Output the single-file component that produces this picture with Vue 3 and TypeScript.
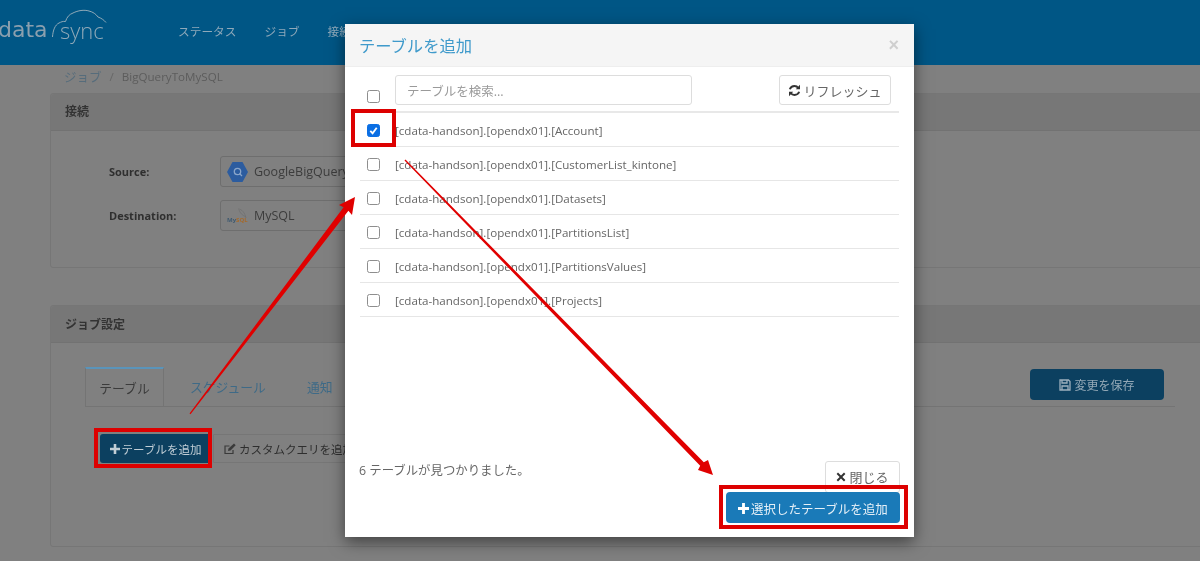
<script setup lang="ts">
const rows = [
  { name: '[cdata-handson].[opendx01].[Account]', checked: true },
  { name: '[cdata-handson].[opendx01].[CustomerList_kintone]', checked: false },
  { name: '[cdata-handson].[opendx01].[Datasets]', checked: false },
  { name: '[cdata-handson].[opendx01].[PartitionsList]', checked: false },
  { name: '[cdata-handson].[opendx01].[PartitionsValues]', checked: false },
  { name: '[cdata-handson].[opendx01].[Projects]', checked: false },
]
const navItems = ['ステータス', 'ジョブ', '接続']
</script>

<template>
  <div class="page">
    <header class="nav">
      <div class="logo">
        <span class="logo-data">data</span>
        <span class="logo-sync">sync</span>
        <svg class="logo-cloud" width="130" height="65" viewBox="0 0 130 65" fill="none" stroke="#8fa9b8" stroke-width="1">
          <path d="M52.500 37C53 30 55 25 59 23C61 22 63 21 65.500 21.500C67 17 69 14.500 73 13C78 10.500 84 9.500 89 11C93 12 96 14 98 17C101 18 104 20 106 22.500" />
        </svg>
      </div>
      <nav class="nav-links">
        <span v-for="item in navItems" :key="item">{{ item }}</span>
      </nav>
    </header>

    <main class="content">
      <div class="crumb"><span class="crumb-link">ジョブ</span><span class="crumb-sep">/</span><span>BigQueryToMySQL</span></div>

      <section class="panel panel-conn">
        <div class="panel-head">接続</div>
        <div class="conn-body">
          <div class="conn-row">
            <label>Source:</label>
            <div class="select">
              <svg width="21" height="20" viewBox="0 0 21 20">
                <path d="M5.500 0H15.500L21 10L15.500 20H5.500L0 10Z" fill="#2c5c9f" />
                <circle cx="10.500" cy="9.500" r="3.200" fill="none" stroke="#8aa5c9" stroke-width="1.300" />
                <path d="M12.500 11.500L15 14" stroke="#8aa5c9" stroke-width="1.300" />
              </svg>
              <span>GoogleBigQuery</span>
            </div>
          </div>
          <div class="conn-row">
            <label>Destination:</label>
            <div class="select">
              <svg width="21" height="20" viewBox="0 0 21 20">
                <path d="M11 3C15 3 18 7 19 12M12 4C13 7 15 9 19 11" fill="none" stroke="#6f6f6f" stroke-width=".7" />
                <text x="0" y="16" font-size="6" font-weight="700" font-family="Open Sans, sans-serif" fill="#3f5a70">My<tspan fill="#a5692a">SQL</tspan></text>
              </svg>
              <span>MySQL</span>
            </div>
          </div>
        </div>
      </section>

      <section class="panel panel-job">
        <div class="panel-head">ジョブ設定</div>
        <div class="job-body">
          <div class="tabs">
            <span class="tab active">テーブル</span>
            <span class="tab">スケジュール</span>
            <span class="tab">通知</span>
            <button class="btn-save">
              <svg width="12" height="12" viewBox="0 0 12 12" fill="none" stroke="#9db0bd" stroke-width="1.300">
                <path d="M1 1H9.500L11 2.500V11H1Z" /><path d="M3 1V4H8V1M3 11V7H9V11" />
              </svg>
              変更を保存
            </button>
          </div>
          <div class="job-actions">
            <button class="btn-add">
              <svg width="10" height="10" viewBox="0 0 10 10"><path d="M3.700 0H6.300V3.700H10V6.300H6.300V10H3.700V6.300H0V3.700H3.700Z" fill="#c2ced6" /></svg>
              テーブルを追加
            </button>
            <button class="btn-custom">
              <svg width="12" height="12" viewBox="0 0 12 12" fill="none" stroke="#3a3a3a" stroke-width="1.200">
                <path d="M9 7V10.500H1V3H5.500" /><path d="M4 8L4.500 5.500L10 .5L11.700 2.200L6.500 7.500Z" fill="#3a3a3a" stroke="none" />
              </svg>
              カスタムクエリを追加
            </button>
          </div>
        </div>
      </section>
    </main>

    <div class="modal">
      <div class="modal-head">
        <h2>テーブルを追加</h2>
        <span class="close-x">×</span>
      </div>
      <div class="modal-body">
        <div class="search-row">
          <input type="checkbox" class="check check-all" />
          <div class="search">テーブルを検索...</div>
          <button class="btn-refresh">
            <svg width="13" height="13" viewBox="0 0 13 13" fill="none" stroke="#333" stroke-width="1.900">
              <path d="M1.800 5.200C2.600 3 4.400 2 6.500 2C8 2 9.400 2.700 10.300 4" />
              <path d="M11.200 7.800C10.400 10 8.600 11 6.500 11C5 11 3.600 10.300 2.700 9" />
              <path d="M12 .8V5.200H7.800Z" fill="#333" stroke="none" />
              <path d="M1 12.200V7.800H5.200Z" fill="#333" stroke="none" />
            </svg>
            リフレッシュ
          </button>
        </div>
        <div v-for="row in rows" :key="row.name" class="row">
          <input type="checkbox" class="check" :checked="row.checked" />
          <span>{{ row.name }}</span>
        </div>
      </div>
      <div class="modal-foot">
        <span class="found">6 テーブルが見つかりました。</span>
        <div class="foot-btns">
          <button class="btn-close">
            <svg width="10" height="10" viewBox="0 0 10 10"><path d="M2 .6L5 3.600L8 .6L9.400 2L6.400 5L9.400 8L8 9.400L5 6.400L2 9.400L.6 8L3.600 5L.6 2Z" fill="#333" /></svg>
            閉じる
          </button>
          <button class="btn-primary">
            <svg width="11" height="11" viewBox="0 0 10 10"><path d="M3.700 0H6.300V3.700H10V6.300H6.300V10H3.700V6.300H0V3.700H3.700Z" fill="#fff" /></svg>
            選択したテーブルを追加
          </button>
        </div>
      </div>
    </div>

    <div class="mark mark-check"></div>
    <div class="mark mark-add"></div>
    <div class="mark mark-primary"></div>
    <svg class="arrows" width="1200" height="561" viewBox="0 0 1200 561">
      <path d="M189.500 413.500L343.600 207.200L339 205L355 197L352 215L348.400 210.800L190.500 414.300Z" fill="#e00000" />
      <path d="M405.500 159.500L703.800 462.200L708 460L713 475L698 470L700.200 465.800L404.500 160.500Z" fill="#e00000" />
    </svg>
  </div>
</template>

<style>
html, body { margin: 0; padding: 0; }
</style>

<style scoped>
.page {
  position: relative;
  width: 1200px;
  height: 561px;
  overflow: hidden;
  background: #808080;
  font-family: "Open Sans", "Noto Sans CJK JP", sans-serif;
  font-size: 12px;
  color: #444;
  filter: blur(0.35px);
}
button { font-family: inherit; cursor: pointer; }
.nav {
  height: 65px;
  background: #005685;
  display: flex;
  align-items: center;
  box-sizing: border-box;
}
.logo { position: relative; width: 178px; height: 65px; flex: none; overflow: hidden; }
.logo-data {
  position: absolute; left: -2px; top: 13px;
  font: 400 22px/34px "DejaVu Sans", sans-serif; color: #8a9fae;
}
.logo-sync {
  position: absolute; left: 60px; top: 13px;
  font: 300 22px/34px "Open Sans", sans-serif; color: #8fa9b8;
}
.logo-cloud { position: absolute; left: 0; top: 0; }
.nav-links { display: flex; gap: 28px; font-size: 11.700px; color: #8fa9ba; padding-bottom: 5px; }
.content { width: 1260px; box-sizing: border-box; padding: 0 50px; }
.crumb { height: 28px; box-sizing: border-box; display: flex; align-items: center; color: #5c5c5c; font-size: 11.600px; padding: 0 0 6px 14px; }
.crumb-link { color: #566c7b; font-size: 12.500px; }
.crumb-sep { margin: 0 8px; color: #666; }
.panel { border: 1px solid #767676; border-radius: 3px; box-sizing: border-box; }
.panel-conn { height: 175px; margin-bottom: 37px; }
.panel-job { height: 242px; }
.panel-head {
  background: #777; height: 37px; display: flex; align-items: center;
  padding: 0 0 2px 14px; font-weight: 700; color: #333; border-bottom: 1px solid #727272;
  box-sizing: border-box; border-radius: 3px 3px 0 0;
}
.panel-job .panel-head { padding-bottom: 0; }
.conn-body { padding-top: 25px; display: flex; flex-direction: column; gap: 13px; }
.conn-row { display: flex; align-items: center; }
.conn-row label { width: 111px; margin-left: 58px; font-size: 11px; font-weight: 700; color: #2f2f2f; }
.select {
  width: 240px; height: 31px; box-sizing: border-box; border: 1px solid #6e6e6e; border-radius: 3px;
  display: flex; align-items: center; gap: 6px; padding-left: 6px; color: #3c3c3c; font-size: 12.500px;
}
.job-body { padding: 24px 34px 0 34px; }
.tabs { display: flex; align-items: stretch; height: 39px; border-bottom: 1px solid #747474; }
.tab { padding: 0 14px; display: flex; align-items: center; font-size: 12.800px; color: #3e6a87; margin-right: 13px; white-space: nowrap; }
.tab.active {
  width: 79px; box-sizing: border-box; padding: 0; justify-content: center; color: #3b3b3b;
  border: 1px solid #747474; border-top: 2px solid #5a94ba; border-bottom: 0; margin-right: 12px;
}
.btn-save {
  margin: 2px 11px 0 auto; width: 134px; height: 31px; border: 0; border-radius: 4px;
  background: #0c4060; color: #93a8b6; font-size: 12px; display: flex; align-items: center; justify-content: center; gap: 3px;
}
.job-actions { display: flex; padding: 27px 0 0 15px; }
.btn-add {
  width: 111px; height: 29px; border: 0; border-radius: 3px 0 0 3px; background: #0c4060; color: #c2ced6;
  font-size: 11.500px; display: flex; align-items: center; justify-content: center; gap: 2px; padding: 0;
}
.btn-custom {
  height: 29px; padding: 0 10px; margin-left: 2px; background: #808080; border: 1px solid #767676; border-radius: 0 3px 3px 0;
  color: #2e2e2e; font-size: 11.500px; display: flex; align-items: center; gap: 3px; white-space: nowrap;
}
.modal {
  position: absolute; left: 345px; top: 24px; width: 569px; height: 513px; background: #fff;
  box-shadow: 0 5px 15px rgba(0,0,0,.5); display: flex; flex-direction: column;
}
.modal-head {
  height: 43px; background: #f5f5f5; border-bottom: 1px solid #eee; box-sizing: border-box;
  display: flex; align-items: center; justify-content: space-between; padding: 0 15px 0 14px;
}
.modal-head h2 { margin: 0; font-size: 16.300px; font-weight: 400; color: #3f9acb; }
.close-x { font: 700 18px/18px "Liberation Sans", sans-serif; color: #cfcfcf; }
.modal-body { padding: 0 15px; }
.search-row { display: flex; align-items: flex-start; height: 46px; box-sizing: border-box; padding-top: 8px; border-bottom: 2px solid #e8e8e8; }
.check {
  appearance: none; -webkit-appearance: none; width: 13px; height: 13px; margin: 0 0 0 6.500px; flex: none; box-sizing: border-box;
  border: 1px solid #8e8e8e; border-radius: 2.500px; background: #fff;
}
.check:checked {
  background: #0b6fe4 no-repeat center/11px 11px;
  border-color: #0b6fe4;
  background-image: url("data:image/svg+xml,%3Csvg xmlns='http://www.w3.org/2000/svg' viewBox='0 0 12 12'%3E%3Cpath d='M2.500 6.500L5 9L9.500 3' fill='none' stroke='white' stroke-width='2'/%3E%3C/svg%3E");
}
.check-all { margin-top: 15px; }
.search {
  width: 297px; height: 30px; box-sizing: border-box; margin-left: 15.500px; border: 1px solid #ddd; border-radius: 3px;
  display: flex; align-items: center; padding-left: 11px; color: #9a9a9a; font-size: 12.500px;
}
.btn-refresh {
  margin-left: 87px; width: 112px; height: 30px; background: #fff; border: 1px solid #ddd; border-radius: 3px; color: #666;
  font-size: 13px; display: flex; align-items: center; justify-content: center; gap: 2px; padding: 0;
}
.row { display: flex; align-items: center; height: 34px; box-sizing: border-box; border-bottom: 1px solid #e6e6e6; color: #666; font-size: 11.600px; padding-top: 1px; }
.row span { margin-left: 15.500px; white-space: nowrap; }
.modal-foot { margin-top: auto; height: 78px; box-sizing: border-box; padding: 0 14px 14px; display: flex; justify-content: space-between; }
.found { color: #666; font-size: 12.400px; padding-top: 2px; }
.foot-btns { display: flex; flex-direction: column; align-items: flex-end; justify-content: flex-end; }
.btn-close {
  width: 75px; height: 32px; background: #fff; border: 1px solid #ddd; border-radius: 3px; color: #666;
  font-size: 13px; display: flex; align-items: center; justify-content: center; gap: 3px; padding: 0 0 1px;
}
.btn-primary {
  margin-top: -1px; width: 174px; height: 31px; background: #1a7ab8; border: 0; border-radius: 4px; color: #e4eff7;
  font-size: 12.500px; display: flex; align-items: center; justify-content: center; gap: 2px; padding: 1px 0 0;
}
.mark { position: absolute; border: 4px solid #dd0000; box-sizing: border-box; }
.mark-check { left: 351px; top: 109px; width: 45px; height: 38px; }
.mark-add { left: 94px; top: 428px; width: 118px; height: 40px; }
.mark-primary { left: 719px; top: 485px; width: 189px; height: 44px; }
.arrows { position: absolute; left: 0; top: 0; pointer-events: none; }
</style>
